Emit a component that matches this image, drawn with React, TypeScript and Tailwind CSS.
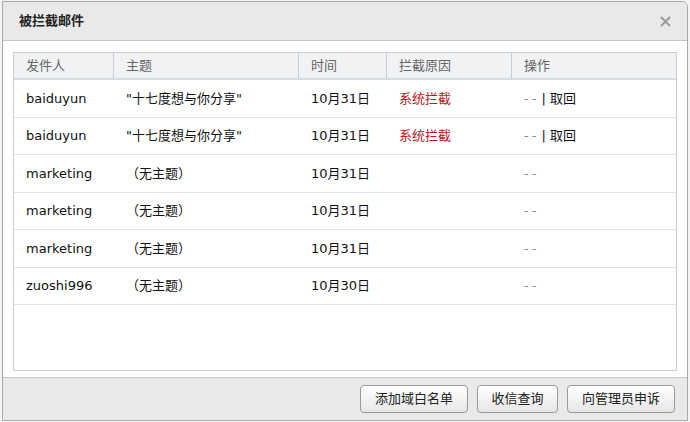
const rows = [
  { from: "baiduyun", subject: "\"十七度想与你分享\"", date: "10月31日", reason: "系统拦截", action: true },
  { from: "baiduyun", subject: "\"十七度想与你分享\"", date: "10月31日", reason: "系统拦截", action: true },
  { from: "marketing", subject: "（无主题）", date: "10月31日", reason: "", action: false },
  { from: "marketing", subject: "（无主题）", date: "10月31日", reason: "", action: false },
  { from: "marketing", subject: "（无主题）", date: "10月31日", reason: "", action: false },
  { from: "zuoshi996", subject: "（无主题）", date: "10月30日", reason: "", action: false },
];

const cols = ["w-[100px]", "w-[185px]", "w-[88px]", "w-[125px]", "flex-1"];
const heads = ["发件人", "主题", "时间", "拦截原因", "操作"];

function Btn({ label, w }: { label: string; w: string }) {
  return (
    <button
      className={`${w} h-[28px] rounded-[4px] border border-[#9a9a9a] bg-gradient-to-b from-white to-[#e6e6e6] text-[13px] text-[#222] shadow-[inset_0_1px_0_#fff]`}
    >
      {label}
    </button>
  );
}

export default function App() {
  return (
    <div
      className="h-[422px] w-[690px] bg-[#f4f4f4] pl-[2px] pt-[1px]"
      style={{ fontFamily: '"DejaVu Sans", "Noto Sans CJK SC", sans-serif' }}
    >
      <div className="flex h-[420px] w-[686px] flex-col overflow-hidden rounded-tr-[6px] border border-[#a8a8a8] bg-white">
        <div className="flex h-[39px] shrink-0 items-center justify-between border-b border-[#c6c6c6] bg-[#e9e9e9] pl-[16px] pr-[16px]">
          <span className="text-[13px] font-bold text-[#222]">被拦截邮件</span>
          <svg width="11" height="11" viewBox="0 0 11 11" className="mt-[1px]">
            <path d="M1 1L10 10M10 1L1 10" stroke="#9a9a9a" strokeWidth="2" />
          </svg>
        </div>

        <div className="flex-1 px-[10px] pb-[6px] pt-[11px]">
          <div className="flex h-full flex-col border border-[#c9cdd2] bg-white">
            <div className="flex h-[27px] shrink-0 border-b-2 border-[#d8dbdf] bg-[#f1f2f4] text-[13px] text-[#666]">
              {heads.map((h, i) => (
                <div
                  key={h}
                  className={`${cols[i]} flex items-center pl-[12px] ${i < 4 ? "border-r border-[#c9cdd2]" : ""}`}
                >
                  {h}
                </div>
              ))}
            </div>
            {rows.map((r, idx) => (
              <div key={idx} className="flex h-[37.5px] shrink-0 border-b border-[#e0e2e5] text-[13px] text-[#111]">
                <div className={`${cols[0]} flex items-center pl-[12px]`}>{r.from}</div>
                <div className={`${cols[1]} flex items-center pl-[12px]`}>{r.subject}</div>
                <div className={`${cols[2]} flex items-center pl-[12px]`}>{r.date}</div>
                <div className={`${cols[3]} flex items-center pl-[12px] text-[#c0141b]`}>{r.reason}</div>
                <div className={`${cols[4]} flex items-center pl-[12px]`}>
                  <span className="tracking-[3px] text-[#888]">--</span>
                  {r.action && <span className="ml-[2px]">| 取回</span>}
                </div>
              </div>
            ))}
          </div>
        </div>

        <div className="flex h-[43px] shrink-0 items-center justify-end gap-[9px] border-t border-[#c6c6c6] bg-[#e9e9e9] pr-[12px]">
          <Btn label="添加域白名单" w="w-[108px]" />
          <Btn label="收信查询" w="w-[81px]" />
          <Btn label="向管理员申诉" w="w-[108px]" />
        </div>
      </div>
    </div>
  );
}
